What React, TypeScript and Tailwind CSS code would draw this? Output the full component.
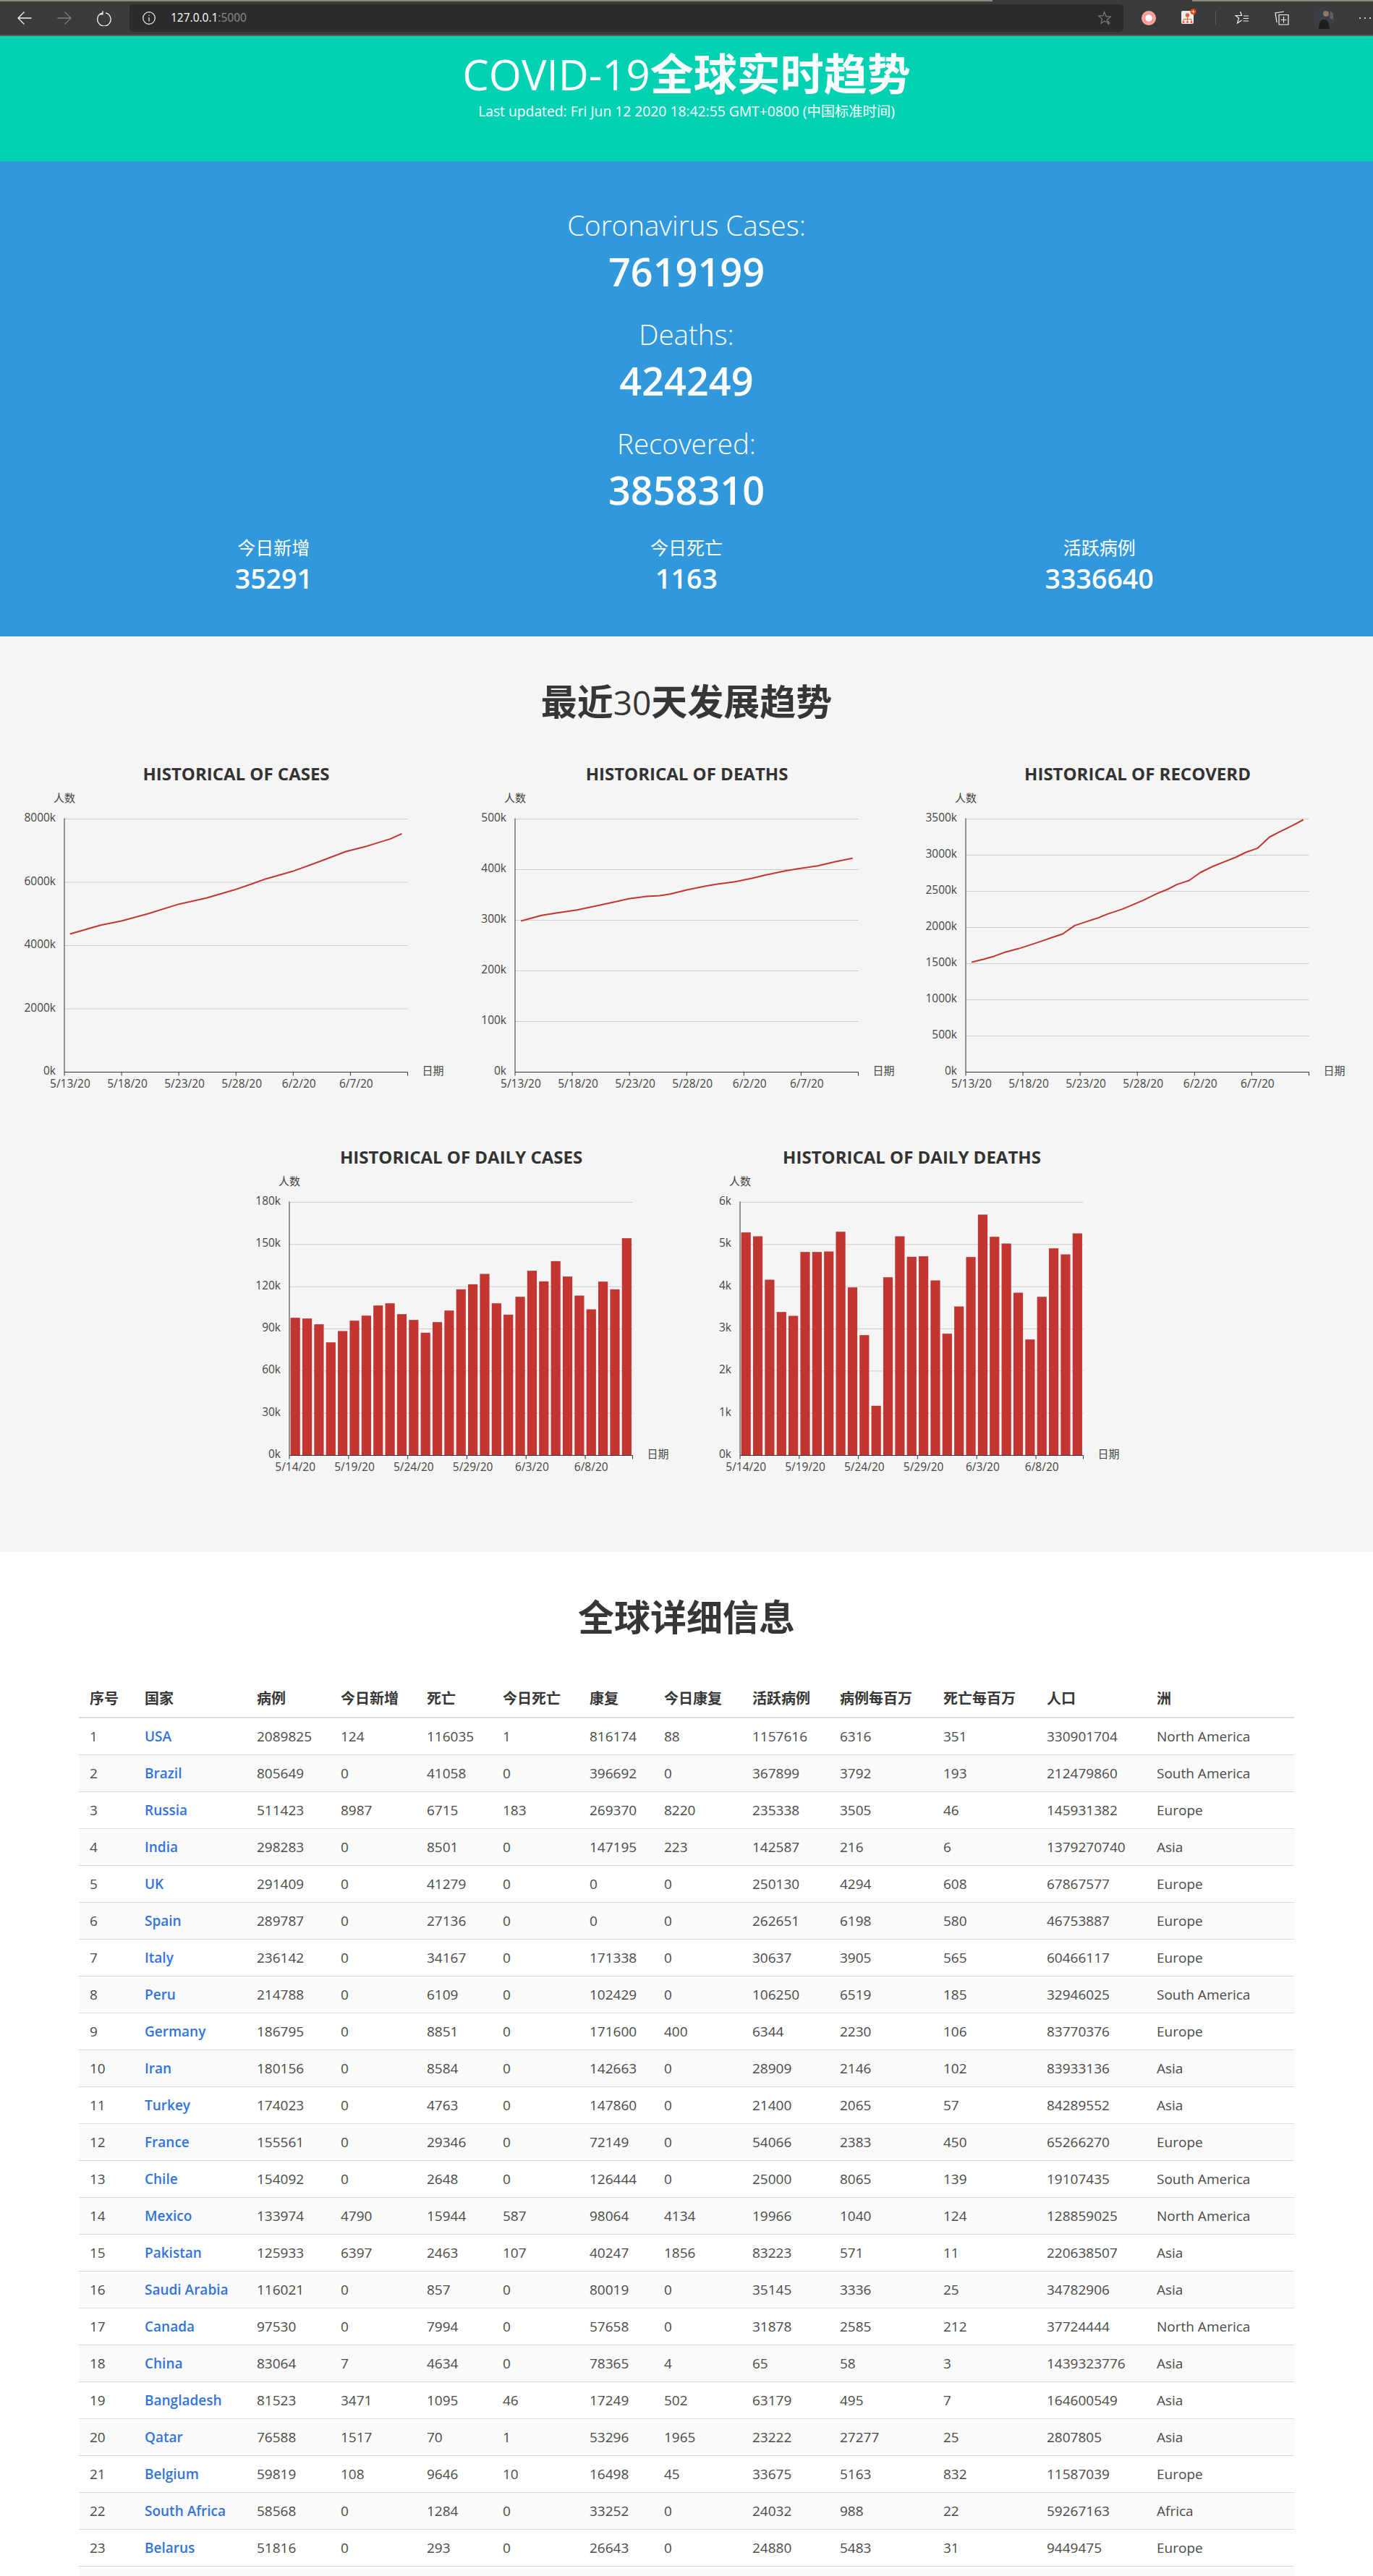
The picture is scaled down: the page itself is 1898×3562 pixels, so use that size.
import React from 'react';

const RED = '#c23531';
const FONT = "'Open Sans','Noto Sans CJK SC',sans-serif";

type Pt = [number, number];

const gridX = 74;
const gridW = 474.5;
const gridTop = 83.5;
const gridH = 350;

// points read off the picture at zoom scale, mapped back into the grid
const toLocal = (pts: Pt[], gx: number, sx: number) =>
  pts.map(([x, y]) => `${gridX + (x - gx) / sx},${gridTop + (y - 395) / 3}`).join(' ');

const casesLine = toLocal([[236,872],[340,835],[410,818],[500,788],[605,748],[700,722],[790,690],[850,665],[900,643],[990,612],[1080,572],[1170,530],[1240,508],[1320,478],[1360,456]], 217, 2.45);
const deathsLine = toLocal([[195,818],[265,795],[310,786],[385,772],[440,758],[500,742],[560,726],[620,716],[665,713],[700,706],[760,688],[820,673],[860,665],[920,655],[980,640],[1020,628],[1090,610],[1130,602],[1200,589],[1260,572],[1318,558]], 175, 2.45);
const recoveredLine = toLocal([[203,989],[245,976],[280,964],[318,947],[362,933],[430,906],[475,887],[512,872],[553,837],[590,822],[635,804],[665,789],[715,769],[785,733],[830,706],[870,686],[900,667],[942,650],[980,617],[1020,593],[1060,573],[1100,554],[1135,533],[1175,516],[1215,470],[1255,445],[1295,421],[1330,398]], 183, 2.458);

const dailyCases = [783,786,810,885,838,795,774,732,723,768,792,845,801,753,665,644,601,723,770,696,588,632,548,612,691,748,633,665,453];
const dailyDeaths = [429,445,625,759,775,510,510,508,426,657,855,1148,615,445,530,528,628,849,736,531,355,447,475,679,873,696,495,520,433];

const lineDates = ['5/13/20', '5/18/20', '5/23/20', '5/28/20', '6/2/20', '6/7/20'];
const barDates = ['5/14/20', '5/19/20', '5/24/20', '5/29/20', '6/3/20', '6/8/20'];

function Chart({ title, yLabels, dates, bands, line, bars }: {
  title: string;
  yLabels: string[];
  dates: string[];
  bands: number;
  line?: string;
  bars?: number[];
}) {
  const band = gridW / bands;
  const bottom = gridTop + gridH;
  const right = gridX + gridW;
  const ticks = [0, 5, 10, 15, 20, 25].map((i) => gridX + i * band).concat(right);
  return (
    <svg width={623} height={508} className="block shrink-0" fontFamily={FONT}>
      <text x={311.5} y={30} textAnchor="middle" fontSize={24} fontWeight={700} fill="#333">{title}</text>
      <text x={gridX} y={60} textAnchor="middle" fontSize={15} fill="#444">人数</text>
      {yLabels.map((l, i) => {
        const y = bottom - (i * gridH) / (yLabels.length - 1);
        return (
          <g key={l}>
            {i > 0 && <line x1={gridX} x2={right} y1={y} y2={y} stroke="#ccc" />}
            <text x={gridX - 12} y={y + 3.5} textAnchor="end" fontSize={15.5} fill="#444">{l}</text>
          </g>
        );
      })}
      {bars && bars.map((top, i) => (
        <rect key={i} x={gridX + i * band + 1.6} y={gridTop + (top - 304) / 3} width={13.2} height={(1354 - top) / 3} fill={RED} />
      ))}
      {line && <polyline points={line} fill="none" stroke={RED} strokeWidth={2} strokeLinejoin="round" />}
      <line x1={gridX} x2={gridX} y1={gridTop - 1} y2={bottom} stroke="#333" />
      <line x1={gridX} x2={right} y1={bottom} y2={bottom} stroke="#333" />
      {ticks.map((x) => <line key={x} x1={x} x2={x} y1={bottom} y2={bottom + 5} stroke="#333" />)}
      {dates.map((d, i) => (
        <text key={d} x={gridX + (i * 5 + 0.5) * band} y={bottom + 21} textAnchor="middle" fontSize={15.5} fill="#444">{d}</text>
      ))}
      <text x={right + 20} y={bottom + 3} fontSize={15} fill="#444">日期</text>
    </svg>
  );
}

const columns = ['序号', '国家', '病例', '今日新增', '死亡', '今日死亡', '康复', '今日康复', '活跃病例', '病例每百万', '死亡每百万', '人口', '洲'];

const rows: (string | number)[][] = [
  [1, 'USA', 2089825, 124, 116035, 1, 816174, 88, 1157616, 6316, 351, 330901704, 'North America'],
  [2, 'Brazil', 805649, 0, 41058, 0, 396692, 0, 367899, 3792, 193, 212479860, 'South America'],
  [3, 'Russia', 511423, 8987, 6715, 183, 269370, 8220, 235338, 3505, 46, 145931382, 'Europe'],
  [4, 'India', 298283, 0, 8501, 0, 147195, 223, 142587, 216, 6, 1379270740, 'Asia'],
  [5, 'UK', 291409, 0, 41279, 0, 0, 0, 250130, 4294, 608, 67867577, 'Europe'],
  [6, 'Spain', 289787, 0, 27136, 0, 0, 0, 262651, 6198, 580, 46753887, 'Europe'],
  [7, 'Italy', 236142, 0, 34167, 0, 171338, 0, 30637, 3905, 565, 60466117, 'Europe'],
  [8, 'Peru', 214788, 0, 6109, 0, 102429, 0, 106250, 6519, 185, 32946025, 'South America'],
  [9, 'Germany', 186795, 0, 8851, 0, 171600, 400, 6344, 2230, 106, 83770376, 'Europe'],
  [10, 'Iran', 180156, 0, 8584, 0, 142663, 0, 28909, 2146, 102, 83933136, 'Asia'],
  [11, 'Turkey', 174023, 0, 4763, 0, 147860, 0, 21400, 2065, 57, 84289552, 'Asia'],
  [12, 'France', 155561, 0, 29346, 0, 72149, 0, 54066, 2383, 450, 65266270, 'Europe'],
  [13, 'Chile', 154092, 0, 2648, 0, 126444, 0, 25000, 8065, 139, 19107435, 'South America'],
  [14, 'Mexico', 133974, 4790, 15944, 587, 98064, 4134, 19966, 1040, 124, 128859025, 'North America'],
  [15, 'Pakistan', 125933, 6397, 2463, 107, 40247, 1856, 83223, 571, 11, 220638507, 'Asia'],
  [16, 'Saudi Arabia', 116021, 0, 857, 0, 80019, 0, 35145, 3336, 25, 34782906, 'Asia'],
  [17, 'Canada', 97530, 0, 7994, 0, 57658, 0, 31878, 2585, 212, 37724444, 'North America'],
  [18, 'China', 83064, 7, 4634, 0, 78365, 4, 65, 58, 3, 1439323776, 'Asia'],
  [19, 'Bangladesh', 81523, 3471, 1095, 46, 17249, 502, 63179, 495, 7, 164600549, 'Asia'],
  [20, 'Qatar', 76588, 1517, 70, 1, 53296, 1965, 23222, 27277, 25, 2807805, 'Asia'],
  [21, 'Belgium', 59819, 108, 9646, 10, 16498, 45, 33675, 5163, 832, 11587039, 'Europe'],
  [22, 'South Africa', 58568, 0, 1284, 0, 33252, 0, 24032, 988, 22, 59267163, 'Africa'],
  [23, 'Belarus', 51816, 0, 293, 0, 26643, 0, 24880, 5483, 31, 9449475, 'Europe'],
];

function BrowserBar() {
  return (
    <div className="h-[50px] bg-[#3b3b3b] border-b-2 border-[#5c5c5c] relative">
      {/* window edge above the tabs */}
      <div className="absolute top-0 left-0 h-[2px] w-[1372px] bg-[#8f8a80]" />
      <div className="absolute top-0 right-0 h-[2px] w-[250px] bg-[#8f8a80]" />
      <div className="flex items-center h-[48px] pt-[2px]">
        <svg width="20" height="20" viewBox="0 0 20 20" fill="none" stroke="#f2f2f2" strokeWidth="1.3" className="ml-[24px]">
          <path d="M19.5 10H1M9.5 1.5 1 10l8.5 8.5" />
        </svg>
        <svg width="20" height="20" viewBox="0 0 20 20" fill="none" stroke="#7d7d7d" strokeWidth="1.3" className="ml-[35px]">
          <path d="M.5 10H19M10.5 1.5 19 10l-8.5 8.5" />
        </svg>
        <svg width="20" height="22" viewBox="0 0 20 22" fill="none" stroke="#f2f2f2" strokeWidth="1.3" className="ml-[35px]">
          <path d="M12 3.4a9.2 9.2 0 1 1-4.2 0M8 .5v5h-5" transform="translate(0 .4)" />
        </svg>
        <div className="ml-[25px] w-[1374px] h-[38px] bg-[#2b2b2b] rounded-[5px] flex items-center">
          <svg width="18" height="18" viewBox="0 0 18 18" fill="none" stroke="#f2f2f2" strokeWidth="1.2" className="ml-[18px]">
            <circle cx="9" cy="9" r="8.3" />
            <path d="M9 8v5.5M9 4.5v1.6" />
          </svg>
          <span className="ml-[21px] text-[15.5px] leading-none text-white">127.0.0.1<span className="text-[#8b8b8b]">:5000</span></span>
          <svg width="20" height="20" viewBox="0 0 20 20" fill="none" stroke="#7d7d7d" strokeWidth="1.2" className="ml-auto mr-[16px]">
            <path d="M9.5 1.5 12 7.6l6.4.5-4.9 4.1 1 3.2-5-1-4.400 3 1.400-6-4.800-4.300 6.400-.5zM15.500 14.500v5M13 17h5" />
          </svg>
        </div>
        <span className="ml-[25px] w-[20px] h-[20px] rounded-full bg-[radial-gradient(circle,#fff_0%,#fff_32%,#ff8fa8_36%,#ffb08f_70%,#fff_78%)]" />
        <svg width="22" height="22" viewBox="0 0 22 22" className="ml-[34px] -mt-[4px]">
          <rect x="1" y="3" width="17" height="18" rx="2" fill="#ededed" />
          <circle cx="9.500" cy="9" r="2.800" fill="#f0623a" />
          <path d="M9.500 11v3.500M4 18v-3.500h11V18M9.500 14.500V18" stroke="#f0623a" fill="none" />
          <circle cx="4" cy="18.500" r="1.500" fill="#f0623a" />
          <circle cx="9.500" cy="18.500" r="1.500" fill="#f0623a" />
          <circle cx="15" cy="18.500" r="1.500" fill="#f0623a" />
          <circle cx="17.500" cy="4" r="4" fill="#e8431f" />
          <path d="M15.500 4h4M17.500 2v4" stroke="#fff" />
        </svg>
        <div className="ml-[26px] w-px h-[20px] bg-[#5c5c5c]" />
        <svg width="20" height="20" viewBox="0 0 20 20" fill="none" stroke="#f2f2f2" strokeWidth="1.2" className="ml-[26px]">
          <path d="M7.500 1 9.500 6.500H1L5.500 10 3.500 17 9.500 13M12 7h7M11.500 10.500H19M11.500 14H19" />
        </svg>
        <svg width="20" height="20" viewBox="0 0 20 20" fill="none" stroke="#f2f2f2" strokeWidth="1.2" className="ml-[35px]">
          <path d="M13 1 1 3l2 13M6 5.500h13V19H6zM12.500 8v8.500M8.500 12.500h8" />
        </svg>
        <svg width="30" height="30" viewBox="0 0 30 30" className="ml-[33px]">
          <circle cx="15" cy="15" r="15" fill="#3a3f47" />
          <path d="M8 30c0-9 3-13 7-13s8 4 8 13z" fill="#1e1d20" />
          <circle cx="18" cy="9" r="4" fill="#8a7a68" />
          <path d="M24 5l4 4v8l-5-2z" fill="#6b5a60" />
        </svg>
        <div className="ml-[34px] flex gap-[5px]">
          <span className="w-[2px] h-[2px] bg-white rounded-full" />
          <span className="w-[2px] h-[2px] bg-white rounded-full" />
          <span className="w-[2px] h-[2px] bg-white rounded-full" />
        </div>
      </div>
    </div>
  );
}

function Headline({ label, value }: { label: string; value: number }) {
  return (
    <div className="mb-[21px]">
      <p className="text-[38.5px] leading-[50px] font-light">{label}</p>
      <p className="text-[54px] leading-[78px] font-semibold">{value}</p>
      <div className="h-[2px]" />
    </div>
  );
}

function Stat({ label, value }: { label: string; value: number }) {
  return (
    <div>
      <p className="text-[25px] leading-[36px]">{label}</p>
      <p className="text-[37.5px] leading-[50px] font-semibold">{value}</p>
    </div>
  );
}

export default function App() {
  return (
    <div className="h-[3562px] overflow-hidden bg-white text-[#4a4a4a] font-['Open_Sans','Noto_Sans_CJK_SC',sans-serif]">
      <BrowserBar />

      <section className="bg-[#00d1b2] text-white text-center h-[173px] pt-[18px]">
        <h1 className="text-[58px] leading-[68px] font-medium">COVID-19<span className="text-[60px] font-bold">全球实时趋势</span></h1>
        <p className="text-[19.3px] leading-[30px] mt-[2px]">Last updated: Fri Jun 12 2020 18:42:55 GMT+0800 (中国标准时间)</p>
      </section>

      <section className="bg-[#3298dc] text-white text-center pt-[63px] pb-[55px]">
        <Headline label="Coronavirus Cases:" value={7619199} />
        <Headline label="Deaths:" value={424249} />
        <Headline label="Recovered:" value={3858310} />
        <div className="grid grid-cols-3 mx-[93px]">
          <Stat label="今日新增" value={35291} />
          <Stat label="今日死亡" value={1163} />
          <Stat label="活跃病例" value={3336640} />
        </div>
      </section>

      <section className="bg-[#f5f5f5] pt-[62px] pb-[59px]">
        <h2 className="text-center text-[50px] leading-[56px] font-bold text-[#363636] mb-[50px]">最近<span className="font-normal text-[46px]">30</span>天发展趋势</h2>
        <div className="flex justify-center mb-[22px]">
          <Chart title="HISTORICAL OF CASES" yLabels={['0k', '2000k', '4000k', '6000k', '8000k']} dates={lineDates} bands={30} line={casesLine} />
          <Chart title="HISTORICAL OF DEATHS" yLabels={['0k', '100k', '200k', '300k', '400k', '500k']} dates={lineDates} bands={30} line={deathsLine} />
          <Chart title="HISTORICAL OF RECOVERD" yLabels={['0k', '500k', '1000k', '1500k', '2000k', '2500k', '3000k', '3500k']} dates={lineDates} bands={30} line={recoveredLine} />
        </div>
        <div className="flex justify-center">
          <Chart title="HISTORICAL OF DAILY CASES" yLabels={['0k', '30k', '60k', '90k', '120k', '150k', '180k']} dates={barDates} bands={29} bars={dailyCases} />
          <Chart title="HISTORICAL OF DAILY DEATHS" yLabels={['0k', '1k', '2k', '3k', '4k', '5k', '6k']} dates={barDates} bands={29} bars={dailyDeaths} />
        </div>
      </section>

      <section className="pt-[62px] px-[109px]">
        <h2 className="text-center text-[50px] leading-[56px] font-bold text-[#363636] mb-[60px]">全球详细信息</h2>
        <table className="w-full table-fixed border-collapse">
          <colgroup>
            <col className="w-[76px]" />
            <col className="w-[155px]" />
            <col className="w-[116px]" />
            <col className="w-[119px]" />
            <col className="w-[105px]" />
            <col className="w-[120px]" />
            <col className="w-[103px]" />
            <col className="w-[122px]" />
            <col className="w-[121px]" />
            <col className="w-[143px]" />
            <col className="w-[143px]" />
            <col className="w-[152px]" />
            <col />
          </colgroup>
          <thead>
            <tr>
              {columns.map((c) => (
                <th key={c} className="px-[15px] py-[10px] text-left text-[20px] leading-[30px] font-bold text-[#363636] border-b-2 border-[#dbdbdb] whitespace-nowrap">{c}</th>
              ))}
            </tr>
          </thead>
          <tbody>
            {rows.map((r) => (
              <tr key={r[0]} className="even:bg-[#fafafa]">
                {r.map((v, i) => (
                  <td key={i} className="px-[15px] py-[10px] text-[19px] leading-[30px] border-b border-[#dbdbdb] whitespace-nowrap">
                    {i === 1 ? <a className="text-[#3273dc] font-semibold">{v}</a> : v}
                  </td>
                ))}
              </tr>
            ))}
            <tr className="bg-[#fafafa]"><td colSpan={13} className="h-[51px]" /></tr>
          </tbody>
        </table>
      </section>
    </div>
  );
}
